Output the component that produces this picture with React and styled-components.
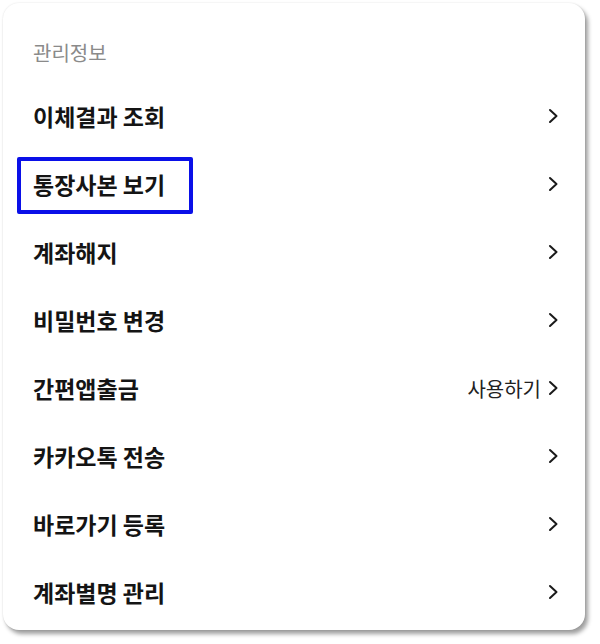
import React from 'react';
import styled, { createGlobalStyle } from 'styled-components';

const GlobalStyle = createGlobalStyle`
  html, body {
    margin: 0;
    padding: 0;
    background: #ffffff;
  }
  body {
    font-family: "Noto Sans CJK KR", "Noto Sans", sans-serif;
  }
`;

const Page = styled.div`
  width: 600px;
  height: 644px;
  padding: 3px 0 0 3px;
  box-sizing: border-box;
`;

const Card = styled.div`
  width: 582px;
  height: 627px;
  box-sizing: border-box;
  background: #ffffff;
  border-radius: 16px;
  box-shadow: 3px 4px 4px rgba(0, 0, 0, 0.38), 0 0 2px rgba(0, 0, 0, 0.12);
  padding: 37px 25px 3px 30px;
`;

const SectionTitle = styled.div`
  font-size: 20px;
  line-height: 26px;
  color: #8a8a8a;
  margin-bottom: 16px;
`;

const Row = styled.div`
  height: 68px;
  display: flex;
  align-items: center;
  justify-content: space-between;
`;

const Label = styled.span`
  position: relative;
  font-size: 23px;
  line-height: 30px;
  font-weight: 600;
  color: #141414;

  ${(p) =>
    p.$marked &&
    `
    &::after {
      content: '';
      position: absolute;
      left: -16px;
      right: -28px;
      top: -12px;
      bottom: -15px;
      border: 4px solid #0a10e8;
      border-radius: 2px;
    }
  `}
`;

const Action = styled.span`
  display: flex;
  align-items: center;
  gap: 5px;
  font-size: 20px;
  color: #222222;
`;

const Chevron = () => (
  <svg width="14" height="16" viewBox="0 0 14 16" fill="none">
    <path d="M4 2 L10.5 8 L4 14" stroke="#1a1a1a" strokeWidth="2" strokeLinecap="round" strokeLinejoin="round" />
  </svg>
);

const items = [
  { label: '이체결과 조회' },
  { label: '통장사본 보기', marked: true },
  { label: '계좌해지' },
  { label: '비밀번호 변경' },
  { label: '간편앱출금', action: '사용하기' },
  { label: '카카오톡 전송' },
  { label: '바로가기 등록' },
  { label: '계좌별명 관리' },
];

export default function App() {
  return (
    <Page>
      <GlobalStyle />
      <Card>
        <SectionTitle>관리정보</SectionTitle>
        {items.map((item) => (
          <Row key={item.label}>
            <Label $marked={item.marked}>{item.label}</Label>
            <Action>
              {item.action}
              <Chevron />
            </Action>
          </Row>
        ))}
      </Card>
    </Page>
  );
}
